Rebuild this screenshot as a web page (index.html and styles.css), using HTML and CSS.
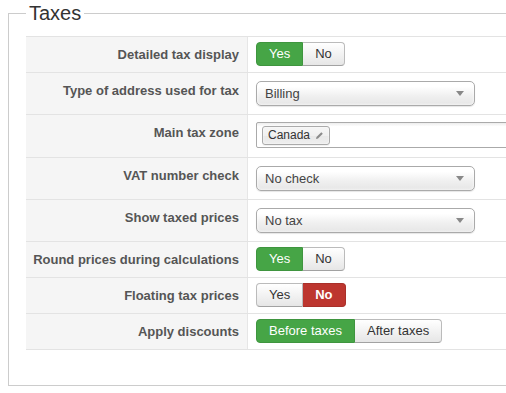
FILE: index.html
```html
<!DOCTYPE html>
<html lang="en">
<head>
    <meta charset="UTF-8">
    <title>Taxes</title>
    <link rel="stylesheet" href="styles.css">
</head>
<body>

    <fieldset class="panel">
        <legend>Taxes</legend>
        <div class="options">
            <div class="row row-short">
                <label>Detailed tax display</label>
                <div class="value">
                    <div class="toggle">
                        <span class="btn btn-yes">Yes</span><span class="btn">No</span>
                    </div>
                </div>
            </div>
            <div class="row row-tall">
                <label>Type of address used for tax</label>
                <div class="value">
                    <div class="select"><span>Billing</span><i class="caret"></i></div>
                </div>
            </div>
            <div class="row row-tags">
                <label>Main tax zone</label>
                <div class="value">
                    <div class="tags">
                        <span class="tag">Canada
                            <svg width="9" height="9" viewBox="0 0 9 9"><path d="M1 8 L1.5 6 L6.3 1.2 L7.8 2.7 L3 7.5 Z" fill="#8a8a8a"/></svg>
                        </span>
                    </div>
                </div>
            </div>
            <div class="row row-tall">
                <label>VAT number check</label>
                <div class="value">
                    <div class="select"><span>No check</span><i class="caret"></i></div>
                </div>
            </div>
            <div class="row row-tall">
                <label>Show taxed prices</label>
                <div class="value">
                    <div class="select"><span>No tax</span><i class="caret"></i></div>
                </div>
            </div>
            <div class="row row-short">
                <label>Round prices during calculations</label>
                <div class="value">
                    <div class="toggle">
                        <span class="btn btn-yes">Yes</span><span class="btn">No</span>
                    </div>
                </div>
            </div>
            <div class="row row-short">
                <label>Floating tax prices</label>
                <div class="value">
                    <div class="toggle">
                        <span class="btn">Yes</span><span class="btn btn-no">No</span>
                    </div>
                </div>
            </div>
            <div class="row row-short">
                <label>Apply discounts</label>
                <div class="value">
                    <div class="toggle">
                        <span class="btn btn-yes">Before taxes</span><span class="btn">After taxes</span>
                    </div>
                </div>
            </div>
        </div>
    </fieldset>

</body>
</html>
```

FILE: styles.css
```css
body {
    font-family: 'Liberation Sans', Arial, sans-serif;
    font-size: 13px;
    color: #333;
    background: #fff;
    margin: 0;
    padding: 1px 0 0 8px;
    overflow: hidden;
}

.panel {
    width: 640px;
    margin: 0;
    padding: 11px 17px 35px;
    border: 1px solid #ccc;
}

.panel legend {
    font-size: 20px;
    line-height: 24px;
    padding: 0 3px;
    color: #333;
}

.options {
    border-top: 1px solid #e3e3e3;
}

.row {
    display: grid;
    grid-template-columns: 222px 1fr;
    border-bottom: 1px solid #e3e3e3;
}

.row-short { height: 35px; }
.row-tall { height: 41px; }
.row-tags { height: 42px; }

.row label {
    box-sizing: border-box;
    background: #f5f5f5;
    border-right: 1px solid #e6e6e6;
    color: #555;
    font-weight: bold;
    text-align: right;
    white-space: nowrap;
    line-height: 18px;
    padding: 9px 8px 0 0;
}

.value {
    padding: 0 8px;
}

.row-short .value { padding-top: 5px; }
.row-tall .value { padding-top: 8px; }
.row-tags .value { padding-top: 7px; }

.toggle {
    display: inline-flex;
}

.btn {
    display: inline-block;
    padding: 2px 12px;
    line-height: 18px;
    font-size: 13px;
    color: #333;
    background: linear-gradient(#ffffff, #e6e6e6);
    border: 1px solid #bbb;
    border-bottom-color: #a2a2a2;
}

.btn:first-child {
    border-radius: 4px 0 0 4px;
}

.btn:last-child {
    border-radius: 0 4px 4px 0;
    border-left: 0;
}

.btn-yes {
    background: #46a546;
    border-color: #3f953f;
    color: #fff;
}

.btn-no {
    background: #bd362f;
    border-color: #a9302a;
    color: #fff;
    font-weight: bold;
}

.select {
    box-sizing: border-box;
    width: 219px;
    height: 25px;
    display: flex;
    align-items: center;
    justify-content: space-between;
    padding: 0 10px 0 8px;
    border: 1px solid #aaa;
    border-radius: 5px;
    background: linear-gradient(#ffffff 20%, #f0f0f0 60%, #e6e6e6);
    box-shadow: 0 0 3px #fff inset, 0 1px 1px rgba(0, 0, 0, 0.1);
    font-size: 13px;
    color: #444;
}

.caret {
    width: 0;
    height: 0;
    border-left: 4px solid transparent;
    border-right: 4px solid transparent;
    border-top: 5px solid #888;
}

.tags {
    box-sizing: border-box;
    width: 300px;
    height: 26px;
    border: 1px solid #aaa;
    border-radius: 2px;
    background: linear-gradient(#eee 1%, #fff 15%);
    display: flex;
    align-items: center;
    padding-left: 5px;
}

.tag {
    display: inline-flex;
    align-items: center;
    gap: 5px;
    height: 17px;
    padding: 0 5px;
    font-size: 12px;
    color: #333;
    border: 1px solid #aaa;
    border-radius: 3px;
    background: linear-gradient(#f4f4f4 20%, #f0f0f0 50%, #e8e8e8 52%, #eee);
    box-shadow: 0 0 2px #fff inset, 0 1px 0 rgba(0, 0, 0, 0.05);
}
```
